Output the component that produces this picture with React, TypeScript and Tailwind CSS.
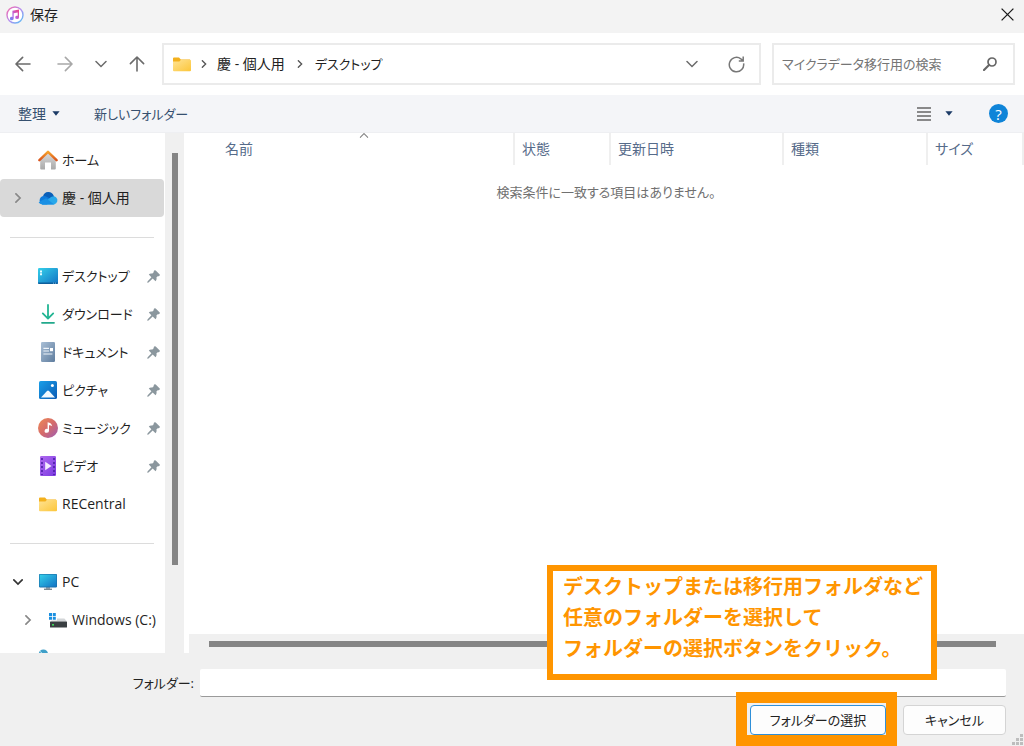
import React, { useState } from "react";

interface SidebarItem {
  label: string;
  icon: React.ReactNode;
  pinned?: boolean;
}

/** Simple open chevron, rotated with classes where it points elsewhere. */
const Chevron: React.FC<{ className?: string; size?: number; stroke?: number }> = ({
  className = "",
  size = 12,
  stroke = 1.5,
}) => (
  <svg
    width={size}
    height={size}
    viewBox="0 0 12 12"
    fill="none"
    stroke="currentColor"
    strokeWidth={stroke}
    strokeLinecap="round"
    className={className}
  >
    <path d="M1 3.5 6 8.5 11 3.5" />
  </svg>
);

const Arrow: React.FC<{ className?: string }> = ({ className = "" }) => (
  <svg
    width="16"
    height="16"
    viewBox="0 0 16 16"
    fill="none"
    stroke="currentColor"
    strokeWidth="1.6"
    strokeLinecap="round"
    strokeLinejoin="round"
    className={className}
  >
    <path d="M15 8H1.2M7.6 1.4 1 8l6.6 6.6" />
  </svg>
);

const Caret: React.FC = () => (
  <svg width="8" height="5" viewBox="0 0 8 5" className="text-[#1b3a66]">
    <path d="M.4.2h7.2L4 4.8Z" fill="currentColor" />
  </svg>
);

const AppIcon: React.FC = () => (
  <svg width="18" height="18" viewBox="0 0 18 18">
    <defs>
      <linearGradient id="app-ring" x1="0" y1="0" x2="1" y2="1">
        <stop offset="0" stopColor="#f86aa8" />
        <stop offset=".5" stopColor="#b48cf0" />
        <stop offset="1" stopColor="#4fc3f5" />
      </linearGradient>
      <linearGradient id="app-note" x1="1" y1="0" x2="0" y2="1">
        <stop offset="0" stopColor="#f5427e" />
        <stop offset=".6" stopColor="#b666e6" />
        <stop offset="1" stopColor="#5b8cf5" />
      </linearGradient>
    </defs>
    <circle cx="9" cy="9" r="8" fill="#fff" stroke="url(#app-ring)" strokeWidth="1.4" />
    <path
      d="M6.4 4.7 13 3.4v8a1.9 1.7 0 1 1-1.3-1.6V6.4L7.700 7.200v5.400a1.900 1.700 0 1 1-1.300-1.600Z"
      fill="url(#app-note)"
    />
  </svg>
);

const FolderIcon: React.FC = () => (
  <svg width="18" height="15" viewBox="0 0 18 15">
    <defs>
      <linearGradient id="folder" x1="0" y1="0" x2="1" y2="1">
        <stop offset="0" stopColor="#ffe394" />
        <stop offset="1" stopColor="#fcc63a" />
      </linearGradient>
    </defs>
    <path d="M0 1.600Q0 .6 1 .6h5l1.800 2H17v3H0Z" fill="#f3b01c" />
    <path d="M0 4.600h6.400L8 2.800h9q1 0 1 1v9.400q0 1-1 1H1q-1 0-1-1Z" fill="url(#folder)" />
  </svg>
);

const HomeIcon: React.FC = () => (
  <svg width="20" height="20" viewBox="0 0 20 20">
    <defs>
      <linearGradient id="home" x1="0" y1="0" x2="0" y2="1">
        <stop offset="0" stopColor="#dcdcdc" />
        <stop offset="1" stopColor="#a9a9a9" />
      </linearGradient>
      <linearGradient id="roof" x1="0" y1="0" x2="0" y2="1">
        <stop offset="0" stopColor="#f7a32b" />
        <stop offset="1" stopColor="#d9541e" />
      </linearGradient>
    </defs>
    <path d="M2.200 9 10 2l7.800 7v9.500q0 1-1 1H13v-7H7v7H3.200q-1 0-1-1Z" fill="url(#home)" />
    <path
      d="M1.400 10.200 10 1.800l8.600 8.400"
      fill="none"
      stroke="url(#roof)"
      strokeWidth="2.400"
      strokeLinecap="round"
      strokeLinejoin="round"
    />
  </svg>
);

const CloudIcon: React.FC = () => (
  <svg width="20" height="14" viewBox="0 0 20 14">
    <path d="M5 5.200A5.600 5.600 0 0 1 15.600 4.600L17 8 9 11Z" fill="#0a5fb8" />
    <path d="M4.400 13.400A4.200 4.200 0 1 1 7.600 5.200L14 8.600 9 13.400Z" fill="#0f7bdb" />
    <path d="M4 13.400 10.200 8.200Q15.200 3.400 18.200 6.600a4 4 0 0 1-2 6.800Z" fill="#28a8ea" />
    <path d="M4.400 13.400q-2.800-.2-3.800-2.200L8 7.200l8.200 6.200Z" fill="#1a90e4" />
  </svg>
);

const DesktopIcon: React.FC = () => (
  <svg width="20" height="16" viewBox="0 0 20 16">
    <defs>
      <linearGradient id="desktop" x1="0" y1="0" x2="1" y2="1">
        <stop offset="0" stopColor="#35d0ea" />
        <stop offset="1" stopColor="#1273c4" />
      </linearGradient>
    </defs>
    <rect width="20" height="16" rx="1.200" fill="url(#desktop)" />
    <path d="M0 14.600h20v.2q0 1.200-1.200 1.200H1.200Q0 16 0 14.800Z" fill="#0e5f9c" />
    <path d="M2 2.400h2v2H2ZM2 5.200h2v2H2Z" fill="#e6fbff" />
    <path d="M15 14.800h1v.8h-1ZM17 14.800h1v.8h-1Z" fill="#9fd8f5" />
  </svg>
);

const DownloadIcon: React.FC = () => (
  <svg width="14" height="20" viewBox="0 0 14 20" fill="none" strokeWidth="1.800" strokeLinecap="round">
    <path d="M7 1v13M1.800 9.400 7 14.600l5.200-5.200" stroke="#22b593" strokeLinejoin="round" />
    <path d="M1 18.800h12" stroke="#22a98c" />
  </svg>
);

const DocumentIcon: React.FC = () => (
  <svg width="14" height="20" viewBox="0 0 14 20">
    <defs>
      <linearGradient id="document" x1="0" y1="0" x2="1" y2="1">
        <stop offset="0" stopColor="#a9bfd6" />
        <stop offset="1" stopColor="#5f7d9e" />
      </linearGradient>
    </defs>
    <rect width="14" height="20" rx="1.200" fill="url(#document)" />
    <path d="M2.400 6.400H8M2.400 9H8M2.400 12h9" stroke="#eef4fa" strokeWidth="1.200" />
    <rect x="9" y="6" width="3" height="3.200" fill="#fff" />
  </svg>
);

const PictureIcon: React.FC = () => (
  <svg width="18" height="18" viewBox="0 0 18 18">
    <defs>
      <linearGradient id="picture" x1="0" y1="0" x2="1" y2="1">
        <stop offset="0" stopColor="#1a9fe8" />
        <stop offset="1" stopColor="#0a5bb5" />
      </linearGradient>
    </defs>
    <rect width="18" height="18" rx="1.600" fill="url(#picture)" />
    <path d="M2 16.400 8 10q1-1 2 0l6 6.400Z" fill="#f2faff" />
    <circle cx="13.400" cy="4.400" r="1.500" fill="#fff" />
  </svg>
);

const MusicIcon: React.FC = () => (
  <svg width="20" height="20" viewBox="0 0 20 20">
    <defs>
      <linearGradient id="music" x1="0" y1="0" x2="1" y2="1">
        <stop offset="0" stopColor="#ef8a55" />
        <stop offset=".5" stopColor="#d56b6b" />
        <stop offset="1" stopColor="#9c5cb5" />
      </linearGradient>
    </defs>
    <circle cx="10" cy="10" r="10" fill="url(#music)" />
    <path d="M9.600 4.200q4 .6 4.600 4-1.400-1.200-3.200-1v5.600a2.200 2 0 1 1-1.400-1.800Z" fill="#fff" />
  </svg>
);

const VideoIcon: React.FC = () => (
  <svg width="16" height="20" viewBox="0 0 16 20">
    <defs>
      <linearGradient id="video" x1="0" y1="0" x2="1" y2="1">
        <stop offset="0" stopColor="#b069f0" />
        <stop offset="1" stopColor="#7a3be0" />
      </linearGradient>
    </defs>
    <rect width="16" height="20" rx="1.200" fill="url(#video)" />
    <path
      d="M2 2v17M14 2v17"
      stroke="#4b1fa5"
      strokeWidth="1.600"
      strokeDasharray="2 2"
    />
    <path d="M5.200 5.800 11.600 10l-6.400 4.200Z" fill="#f4eaff" />
  </svg>
);

const PcIcon: React.FC = () => (
  <svg width="18" height="16" viewBox="0 0 18 16">
    <path d="M7 13h4v2H7Z" fill="#9aa5ad" />
    <path d="M5 14.600h8V16H5Z" fill="#7d8991" />
    <rect width="18" height="13.400" rx=".8" fill="#1a6fa8" />
    <rect x=".6" y=".6" width="16.800" height="12" fill="url(#desktop)" />
  </svg>
);

const DriveIcon: React.FC = () => (
  <svg width="18" height="15" viewBox="0 0 18 15">
    <path d="M0 0h3v3H0ZM3.800 0h3v3h-3ZM0 3.800h3v3H0ZM3.800 3.800h3v3h-3Z" fill="#1a8fe0" />
    <path d="M8 5.400h7.400L18 8.600H1.600L2.600 7.400H8Z" fill="#d3d6d8" />
    <rect x="1" y="8.400" width="17" height="6.200" rx=".6" fill="#3a3f42" />
    <rect x="3" y="11" width="2" height="1.600" fill="#3fd65a" />
  </svg>
);

const NetworkIcon: React.FC = () => (
  <svg width="20" height="18" viewBox="0 0 20 18">
    <circle cx="5.400" cy="5" r="4.600" fill="#3f9fc8" />
    <path d="M2 2.400 5 5 2.600 7.600" stroke="#b9e6f5" fill="none" />
    <rect x="5" y="7" width="14" height="9" fill="#2590d0" />
  </svg>
);

const PinIcon: React.FC = () => (
  <svg width="13" height="13" viewBox="0 0 13 13" className="text-[#8b979e]">
    <path
      d="M7.200.5Q8-.2 8.700.5l3.800 3.800q.7.700 0 1.400-.8.7-1.800.6L9.400 7.600q.7 2.200-.9 3.600L5.700 8.600 1.500 12.500.2 12.800.5 11.500 4.400 7.300 1.800 4.500q1.400-1.600 3.600-.9L6.700 2.300Q6.600 1.100 7.200.5Z"
      fill="currentColor"
    />
  </svg>
);

const quickAccess: SidebarItem[] = [
  { label: "デスクトップ", icon: <DesktopIcon />, pinned: true },
  { label: "ダウンロード", icon: <DownloadIcon />, pinned: true },
  { label: "ドキュメント", icon: <DocumentIcon />, pinned: true },
  { label: "ピクチャ", icon: <PictureIcon />, pinned: true },
  { label: "ミュージック", icon: <MusicIcon />, pinned: true },
  { label: "ビデオ", icon: <VideoIcon />, pinned: true },
];

interface SidebarRowProps {
  item: SidebarItem;
  selected?: boolean;
  nested?: boolean;
  small?: boolean;
  expander?: React.ReactNode;
}

const SidebarRow: React.FC<SidebarRowProps> = ({ item, selected, nested, small, expander }) => (
  <li>
    <button
      type="button"
      className={`flex h-[38px] w-[164px] items-center rounded-sm text-left whitespace-nowrap text-[#1f1f1f] ${
        nested ? "pl-[10px]" : ""
      } ${small ? "text-[13px]" : ""} ${selected ? "bg-[#d9d9d9]" : ""}`}
    >
      <span className="flex w-9 shrink-0 justify-center">{expander}</span>
      <span className="flex w-6 shrink-0 justify-center">{item.icon}</span>
      <span className="ml-0.5 flex-1">{item.label}</span>
      {item.pinned && (
        <span className="mr-1 shrink-0">
          <PinIcon />
        </span>
      )}
    </button>
  </li>
);

const Separator: React.FC = () => (
  <li className="flex h-10 w-[164px] items-center px-[10px]">
    <hr className="w-full border-t border-[#dcdcdc]" />
  </li>
);

const columns = [
  { label: "状態", width: "w-24" },
  { label: "更新日時", width: "w-[173px]" },
  { label: "種類", width: "w-36" },
  { label: "サイズ", width: "w-24" },
];

const App: React.FC = () => {
  const [query, setQuery] = useState("");
  const [folder, setFolder] = useState("");

  return (
    <div className="relative flex h-screen flex-col overflow-hidden bg-[#f0f0f0] font-['Open_Sans','Noto_Sans_CJK_JP',sans-serif] text-[14px] leading-5 text-[#222] [font-feature-settings:'palt']">
      {/* Title bar */}
      <header className="flex h-[33px] shrink-0 items-center bg-[#f3f3f3] pr-1.5 pb-1 pl-1.5">
        <AppIcon />
        <h1 className="ml-1.5 flex-1">保存</h1>
        <button type="button" aria-label="閉じる" className="p-1">
          <svg width="13" height="13" viewBox="0 0 13 13" stroke="#1a1a1a" strokeWidth="1.300">
            <path d="M.6.6 12.400 12.400M12.400.6.6 12.400" />
          </svg>
        </button>
      </header>

      {/* Navigation row */}
      <div className="flex h-[62px] shrink-0 items-center bg-white pr-[9px]">
        <div className="flex w-[162px] shrink-0 items-center pl-[15px] text-[#6b6b6b]">
          <button type="button" aria-label="戻る">
            <Arrow />
          </button>
          <button type="button" aria-label="進む" className="ml-[26px] text-[#a8a8a8]">
            <Arrow className="rotate-180" />
          </button>
          <button type="button" aria-label="最近表示した場所" className="ml-[22px]">
            <Chevron />
          </button>
          <button type="button" aria-label="上へ" className="ml-[22px]">
            <Arrow className="rotate-90" />
          </button>
        </div>
        <nav className="flex h-[42px] flex-1 items-center border-2 border-[#ebebeb] pl-[9px]">
          <FolderIcon />
          <Chevron className="mx-[9px] -rotate-90 text-[#555]" size={8} stroke={2} />
          <a href="#personal">慶 - 個人用</a>
          <Chevron className="mx-[11px] -rotate-90 text-[#555]" size={8} stroke={2} />
          <a href="#desktop" className="text-[13px]">
            デスクトップ
          </a>
          <button type="button" aria-label="履歴" className="ml-auto text-[#6b6b6b]">
            <Chevron />
          </button>
          <button type="button" aria-label="更新" className="mr-[14px] ml-[30px]">
            <svg width="17" height="17" viewBox="0 0 17 17" fill="none" stroke="#777" strokeWidth="1.500">
              <path d="M15.600 7.400A7.200 7.200 0 1 1 12.800 2.800L14.800 4.600M15.200.6V5H10.800" />
            </svg>
          </button>
        </nav>
        <div className="ml-[11px] flex h-[42px] w-[243px] items-center border-2 border-[#ebebeb] pr-4 pl-2">
          <input
            type="search"
            aria-label="検索"
            placeholder="マイクラデータ移行用の検索"
            value={query}
            onChange={(e) => setQuery(e.target.value)}
            className="min-w-0 flex-1 text-[13px] outline-none placeholder:text-[#757575]"
          />
          <svg width="14" height="14" viewBox="0 0 14 14" fill="none" stroke="#666">
            <circle cx="9" cy="5" r="4" strokeWidth="1.700" />
            <path d="M6 8 1 13" strokeWidth="2.200" strokeLinecap="round" />
          </svg>
        </div>
      </div>

      {/* Command bar */}
      <div className="flex h-[38px] shrink-0 items-center border-b border-[#eeeff2] bg-[#f4f5f8] pr-4 pl-[18px] text-[#36506f]">
        <button type="button" className="flex items-center gap-1.5">
          整理
          <Caret />
        </button>
        <button type="button" className="ml-[34px] text-[13px]">
          新しいフォルダー
        </button>
        <button type="button" aria-label="表示方法" className="ml-auto flex items-center gap-[14px]">
          <svg width="14" height="14" viewBox="0 0 14 14" stroke="#666" strokeWidth="1.500">
            <path d="M0 1h14M0 5h14M0 9h14M0 13h14" />
          </svg>
          <Caret />
        </button>
        <button
          type="button"
          aria-label="ヘルプ"
          className="ml-9 flex size-[19px] items-center justify-center rounded-full bg-[#0f84d8] text-[15px] text-white"
        >
          ?
        </button>
      </div>

      <div className="flex min-h-0 flex-1 bg-white">
        {/* Folder tree */}
        <aside className="flex w-[184px] shrink-0">
          <ul className="w-[165px] overflow-hidden pt-2">
            <SidebarRow small item={{ label: "ホーム", icon: <HomeIcon /> }} />
            <SidebarRow
              item={{ label: "慶 - 個人用", icon: <CloudIcon /> }}
              selected
              expander={<Chevron className="-rotate-90 text-[#888]" size={10} stroke={2} />}
            />
            <Separator />
            {quickAccess.map((item) => (
              <SidebarRow key={item.label} item={item} small />
            ))}
            <SidebarRow item={{ label: "RECentral", icon: <FolderIcon /> }} />
            <Separator />
            <SidebarRow
              item={{ label: "PC", icon: <PcIcon /> }}
              expander={<Chevron className="text-[#333]" size={10} stroke={2} />}
            />
            <SidebarRow
              nested
              item={{ label: "Windows (C:)", icon: <DriveIcon /> }}
              expander={<Chevron className="-rotate-90 text-[#888]" size={10} stroke={2} />}
            />
            <SidebarRow item={{ label: "", icon: <NetworkIcon /> }} />
          </ul>
          <div className="flex flex-1 justify-center bg-[#f0f0f0] pt-5">
            <div className="h-[412px] w-1.5 bg-[#858585]" />
          </div>
        </aside>

        {/* File list */}
        <main className="ml-[5px] flex min-w-0 flex-1 flex-col">
          <div className="flex-1">
            <table className="w-full table-fixed">
              <thead className="text-left text-[#566b8a]">
                <tr className="h-8">
                  <th className="border-r-2 border-[#efefef] p-0 font-normal">
                    <div className="relative ml-[26px] pl-[10px]">
                      <Chevron
                        className="absolute -top-2 left-1/2 -translate-x-1/2 rotate-180 text-[#888]"
                        size={9}
                      />
                      名前
                    </div>
                  </th>
                  {columns.map((column) => (
                    <th
                      key={column.label}
                      className={`border-r-2 border-[#efefef] p-0 pl-[7px] font-normal ${column.width}`}
                    >
                      {column.label}
                    </th>
                  ))}
                </tr>
              </thead>
              <tbody>
                <tr>
                  <td colSpan={5} className="p-0 pt-[17px] text-center text-[13px] text-[#707070]">
                    検索条件に一致する項目はありません。
                  </td>
                </tr>
              </tbody>
            </table>
          </div>
          <div className="flex h-[19px] items-center bg-[#f0f0f0] pr-7 pl-5">
            <div className="h-1.5 w-full bg-[#858585]" />
          </div>
        </main>
      </div>

      {/* Folder name and buttons */}
      <footer className="shrink-0 pt-4 pr-[18px] pb-[11px]">
        <div className="flex items-center">
          <label htmlFor="folder" className="w-[194px] text-right text-[13px]">
            フォルダー:
          </label>
          <input
            id="folder"
            type="text"
            value={folder}
            onChange={(e) => setFolder(e.target.value)}
            className="ml-1.5 h-7 min-w-0 flex-1 rounded-xs border-b border-[#9a9a9a] bg-white px-2 outline-none"
          />
        </div>
        <div className="mt-2 flex justify-end gap-[17px] text-[13px]">
          <div className="relative">
            <button
              type="button"
              className="h-[30px] w-[136px] rounded-[4px] border border-[#2f8fd8] bg-[#fdfdfd]"
            >
              フォルダーの選択
            </button>
            <div className="pointer-events-none absolute -top-[13px] -right-[11px] -bottom-[11px] -left-[14px] border-[11px] border-[#ff9500]" />
          </div>
          <button
            type="button"
            className="h-[30px] w-[103px] rounded-[4px] border border-[#d4d4d4] bg-[#fdfdfd]"
          >
            キャンセル
          </button>
        </div>
      </footer>

      {/* Resize grip */}
      <svg width="12" height="12" viewBox="0 0 12 12" className="absolute right-0 bottom-0 text-[#bdbdbd]">
        <path
          d="M8 0h3v3H8ZM4 4h3v3H4ZM8 4h3v3H8ZM0 8h3v3H0ZM4 8h3v3H4ZM8 8h3v3H8Z"
          fill="currentColor"
        />
      </svg>

      {/* Instruction callout */}
      <p className="absolute right-[87px] bottom-[66px] h-[115px] w-[390px] border-[6px] border-[#ff9500] bg-white px-[10px] text-[20px] leading-[31px] font-bold whitespace-nowrap text-[#ff9500] [font-feature-settings:normal]">
        デスクトップまたは移行用フォルダなど
        <br />
        任意のフォルダーを選択して
        <br />
        フォルダーの選択ボタンをクリック。
      </p>
    </div>
  );
};

export default App;
